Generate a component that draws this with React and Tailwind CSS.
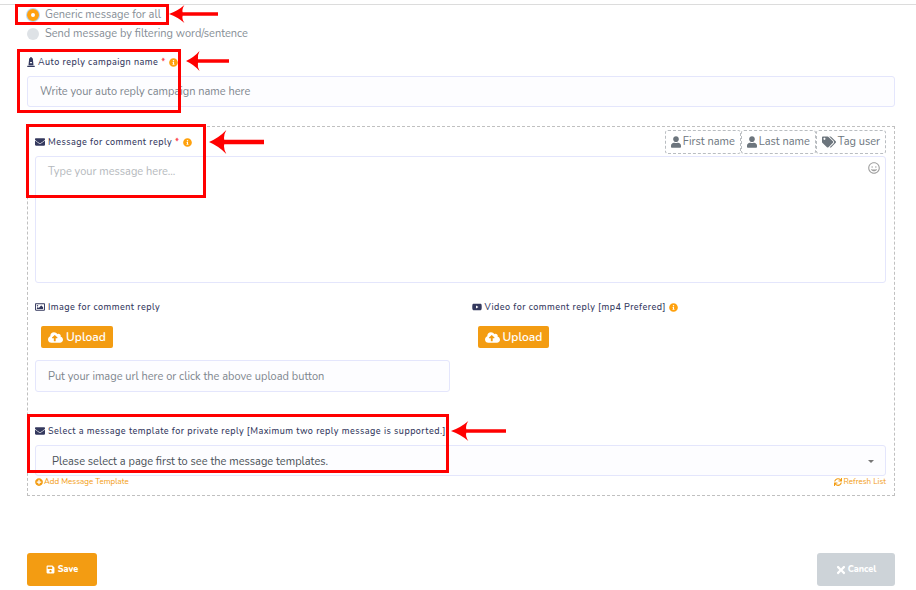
import { useState } from "react";
import {
  FaCloudUploadAlt,
  FaEnvelope,
  FaInfoCircle,
  FaMonument,
  FaPlusCircle,
  FaRegGrin,
  FaRegImage,
  FaSave,
  FaSync,
  FaTags,
  FaTimes,
  FaUser,
  FaYoutube,
} from "react-icons/fa";

const inputClass =
  "block w-full rounded-[3px] border border-[#e4e6fc] bg-[#fdfdff] px-3 text-[11px] text-[#495057] outline-none placeholder:text-[#7d868e]";

function Label({ icon: Icon, iconClass = "w-[10px]", htmlFor, required, info, children }) {
  return (
    <label
      htmlFor={htmlFor}
      className="flex h-4 items-center gap-[3px] whitespace-nowrap text-[9px] leading-4 font-medium tracking-wider text-[#34395e]"
    >
      <Icon className={"h-[10px] shrink-0 " + iconClass} />
      <span>{children}</span>
      {required && <span className="text-red-500">*</span>}
      {info && <FaInfoCircle className="h-[9px] w-[9px] shrink-0 text-[#ffa10d]" />}
    </label>
  );
}

function RadioOption({ value, checked, onChange, children }) {
  return (
    <label className="flex h-[19px] items-center gap-[6px] text-[11px] text-[#868e96]">
      <input
        type="radio"
        name="reply_type"
        value={value}
        checked={checked}
        onChange={() => onChange(value)}
        className="h-3 w-3 appearance-none rounded-full bg-[#dee2e6] checked:border-4 checked:border-[#ffa10d] checked:bg-white checked:ring-1 checked:ring-[#b5d5f5]"
      />
      <span className="pt-px">{children}</span>
    </label>
  );
}

function TagButton({ icon: Icon, iconClass = "w-[10px]", children }) {
  return (
    <button
      type="button"
      className="flex h-6 items-center gap-[2px] rounded-[3px] border border-dashed border-[#b9bdc1] px-[5px] text-[11px] text-[#6c757d]"
    >
      <Icon className={"h-[14px] " + iconClass} />
      {children}
    </button>
  );
}

function UploadButton() {
  return (
    <button
      type="button"
      className="flex h-[22px] items-center gap-[3px] rounded-[2px] bg-[#f39c12] px-[7px] text-[12px] font-semibold text-white"
    >
      <FaCloudUploadAlt className="h-[15px] w-[15px]" />
      Upload
    </button>
  );
}

function Highlight({ className }) {
  return <div className={"pointer-events-none absolute border-3 border-[#f00] " + className} />;
}

function Arrow({ className }) {
  return (
    <svg
      viewBox="0 0 54 22"
      preserveAspectRatio="none"
      className={"pointer-events-none absolute " + className}
      fill="#f00"
      aria-hidden="true"
    >
      <path d="M0 11Q10 7 17 0Q14 5 15 9H54V13H15Q14 17 17 22Q10 15 0 11Z" />
    </svg>
  );
}

export default function App() {
  const [replyType, setReplyType] = useState("generic");

  return (
    <main className="relative bg-white pt-1 font-['Nunito',Lato,sans-serif]">
      <form
        className="border-t border-[#dcdcdc] pr-[21px] pl-[27px]"
        onSubmit={(e) => e.preventDefault()}
      >
        <div className="pb-[11px]">
          <RadioOption value="generic" checked={replyType === "generic"} onChange={setReplyType}>
            Generic message for all
          </RadioOption>
          <RadioOption value="filter" checked={replyType === "filter"} onChange={setReplyType}>
            Send message by filtering word/sentence
          </RadioOption>
        </div>

        <Label icon={FaMonument} iconClass="w-2" htmlFor="campaign" required info>
          Auto reply campaign name
        </Label>
        <input
          id="campaign"
          type="text"
          placeholder="Write your auto reply campaign name here"
          className={inputClass + " mt-[6px] h-[31px]"}
        />

        <section className="mt-[19px] border border-dashed border-[#c0c0c0] pt-[3px] pr-2 pb-[7px] pl-[7px]">
          <div className="flex items-center justify-between">
            <Label icon={FaEnvelope} htmlFor="message" required info>
              Message for comment reply
            </Label>
            <div className="flex">
              <TagButton icon={FaUser}>First name</TagButton>
              <TagButton icon={FaUser}>Last name</TagButton>
              <TagButton icon={FaTags} iconClass="w-[14px]">Tag user</TagButton>
            </div>
          </div>
          <div className="relative mt-[2px]">
            <textarea
              id="message"
              placeholder="Type your message here..."
              className="block h-[127px] w-full resize-none rounded-[3px] border border-[#e4e6fc] px-3 py-2 text-[11px] leading-[14px] outline-none placeholder:text-[#b5b9bd]"
            />
            <button type="button" aria-label="Insert emoji" className="absolute top-[6px] right-[6px]">
              <FaRegGrin className="h-3 w-3 text-[#a0a0a0]" />
            </button>
          </div>

          <div className="mt-4 grid grid-cols-2 gap-[22px]">
            <div>
              <Label icon={FaRegImage} htmlFor="image_url">
                Image for comment reply
              </Label>
              <div className="mt-[11px] ml-[6px] flex">
                <UploadButton />
              </div>
              <input
                id="image_url"
                type="text"
                placeholder="Put your image url here or click the above upload button"
                className={inputClass + " mt-3 h-8"}
              />
            </div>
            <div>
              <Label icon={FaYoutube} info>
                Video for comment reply [mp4 Prefered]
              </Label>
              <div className="mt-[11px] ml-[6px] flex">
                <UploadButton />
              </div>
            </div>
          </div>

          <div className="mt-[31px]">
            <Label icon={FaEnvelope} htmlFor="template">
              Select a message template for private reply [Maximum two reply message is supported.]
            </Label>
            <div className="relative mt-[6px]">
              <select
                id="template"
                className="block h-[31px] w-full appearance-none rounded-[3px] border border-[#e4e6fc] bg-[#fdfdff] px-4 pt-[3px] text-[11px] text-[#495057] outline-none"
              >
                <option>Please select a page first to see the message templates.</option>
              </select>
              <svg
                viewBox="0 0 6 3"
                className="pointer-events-none absolute top-[15px] right-3 h-[3px] w-[6px]"
                fill="#777"
                aria-hidden="true"
              >
                <path d="M0 0H6L3 3Z" />
              </svg>
            </div>
            <div className="flex h-3 items-center justify-between text-[8px] text-[#f39c12]">
              <a href="#add-template" className="flex items-center gap-px">
                <FaPlusCircle className="h-2 w-2" />
                Add Message Template
              </a>
              <a href="#refresh" className="flex items-center gap-px">
                <FaSync className="h-2 w-2" />
                Refresh List
              </a>
            </div>
          </div>
        </section>

        <div className="mt-[57px] flex justify-between text-[9px] font-extrabold text-white">
          <button
            type="submit"
            className="flex h-[33px] w-[70px] items-center justify-center gap-[3px] rounded-[3px] bg-[#f39c12]"
          >
            <FaSave className="h-[9px] w-[9px]" />
            Save
          </button>
          <button
            type="button"
            className="flex h-[33px] w-[78px] items-center justify-center gap-[2px] rounded-[3px] bg-[#cdd3d8]"
          >
            <FaTimes className="h-3 w-[10px]" />
            Cancel
          </button>
        </div>
      </form>

      {/* walkthrough markers */}
      <Highlight className="top-1 left-[15px] h-[21px] w-[154px]" />
      <Highlight className="top-[49px] left-[17px] h-16 w-[164px]" />
      <Highlight className="top-[124px] left-[26px] h-[74px] w-[180px]" />
      <Highlight className="top-[414px] left-[27px] h-[59px] w-[422px]" />
      <Arrow className="top-[5px] left-[169px] h-[18px] w-[49px]" />
      <Arrow className="top-[51px] left-[186px] h-5 w-[43px]" />
      <Arrow className="top-[130px] left-[209px] h-6 w-[55px]" />
      <Arrow className="top-[421px] left-[451px] h-5 w-[55px]" />
    </main>
  );
}
